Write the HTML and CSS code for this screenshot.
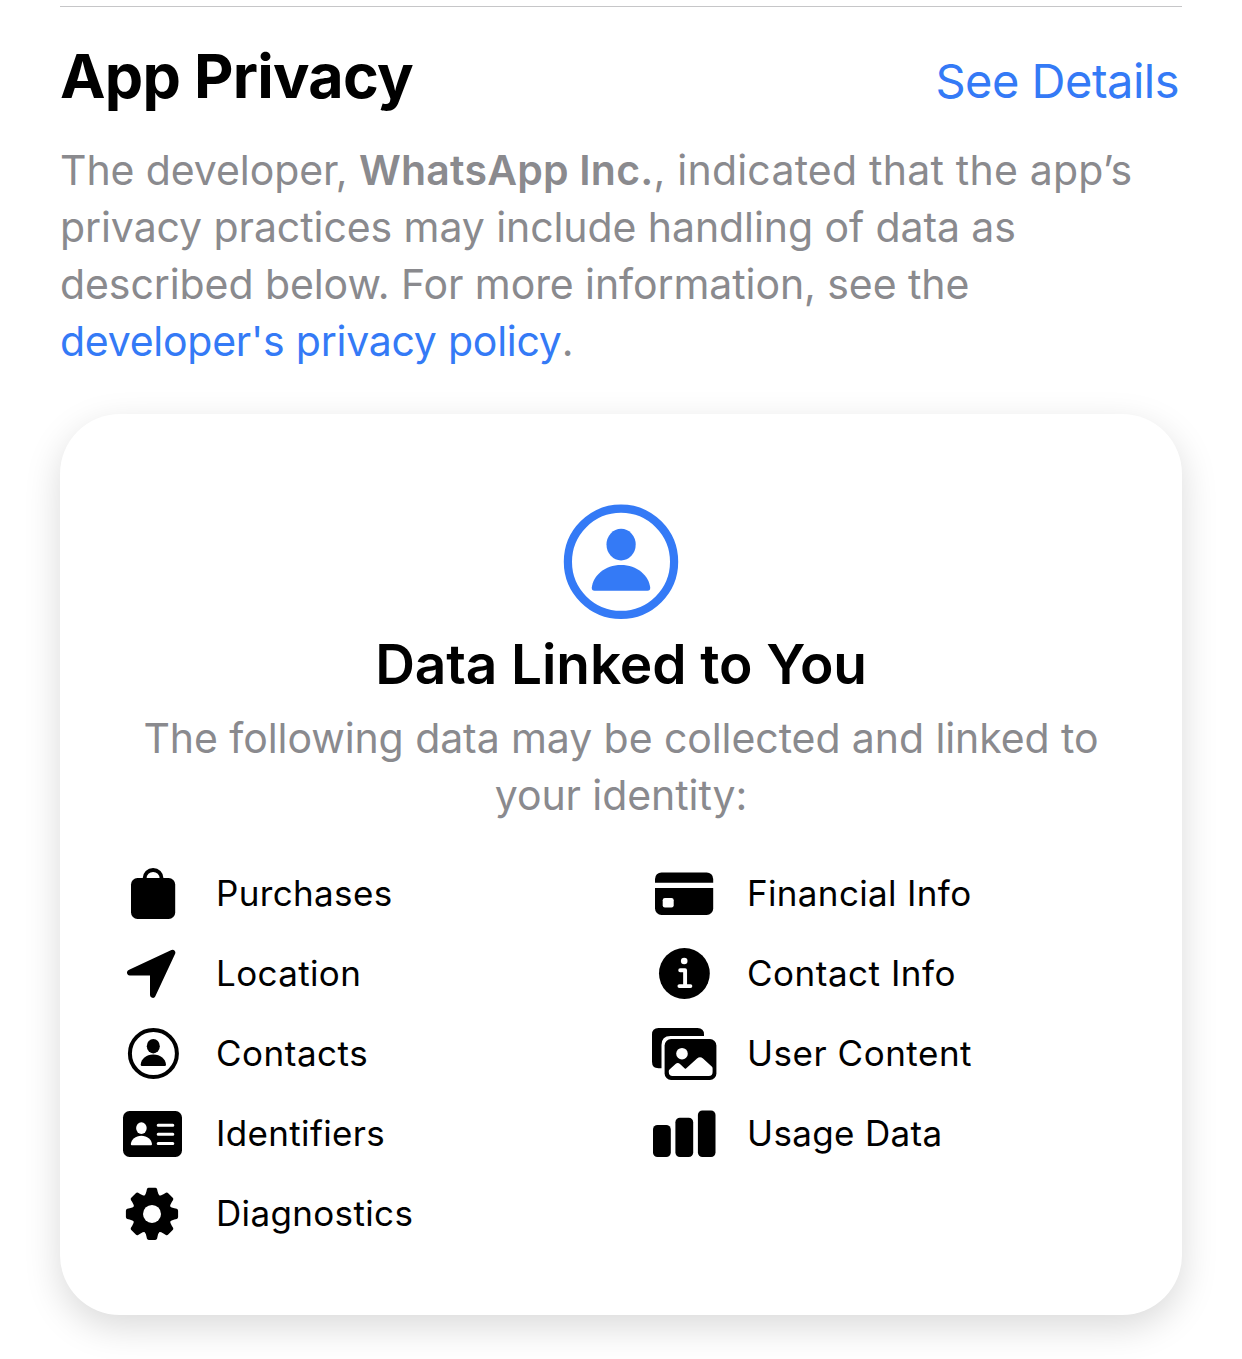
FILE: index.html
```html
<!DOCTYPE html>
<html lang="en">
<head>
<meta charset="utf-8">
<meta name="viewport" content="width=device-width, initial-scale=1">
<title>App Privacy</title>
<link rel="stylesheet" href="styles.css">
</head>
<body>
<main class="page">
  <header class="header">
    <h1 class="title">App Privacy</h1>
    <a class="details">See Details</a>
  </header>
  <p class="body intro">
    The developer, <strong>WhatsApp Inc.</strong><span class="line-tail">, indicated that the app’s</span><br>
    privacy practices may include handling of data as<br>
    described below. For more information, see the<br>
    <a class="link">developer's privacy policy</a>.
  </p>
  <section class="card">
    <svg class="hero" viewBox="0 0 116 116" aria-hidden="true">
      <circle cx="58" cy="57.8" r="53.1" fill="none" stroke="currentColor" stroke-width="8.2"/>
      <ellipse cx="58.1" cy="40.6" rx="14.6" ry="15.8" fill="currentColor"/>
      <path d="M31.5 86.8Q28.6 86.8 28.8 83.6C30 71.5 42 60.9 58 60.9S86 71.5 87.2 83.6Q87.4 86.8 84.5 86.8Z" fill="currentColor"/>
    </svg>
    <h2 class="card-title">Data Linked to You</h2>
    <p class="body card-text">The following data may be collected and linked to<br>your identity:</p>
    <ul class="list">
      <li class="item">
        <svg class="icon" viewBox="0 0 80 80" aria-hidden="true">
          <rect x="18" y="25" width="44.2" height="41" rx="6.5"/>
          <path d="M31.6 27V25.5A8.5 8.5 0 0 1 48.6 25.5V27" fill="none" stroke="currentColor" stroke-width="3.9"/>
        </svg>
        <span>Purchases</span>
      </li>
      <li class="item">
        <svg class="icon" viewBox="0 0 80 80" aria-hidden="true">
          <rect x="11" y="19.4" width="58.2" height="42.6" rx="6.5"/>
          <path class="cut" d="M10 29.7H70V35H10Z"/>
          <rect class="cut" x="18.7" y="45" width="11" height="9.4" rx="2.2"/>
        </svg>
        <span>Financial Info</span>
      </li>
      <li class="item">
        <svg class="icon" viewBox="0 0 80 80" aria-hidden="true">
          <path d="M16.8 39.6L59.6 19.6L39.8 62V39.6Z" stroke="currentColor" stroke-width="5.6" stroke-linejoin="round"/>
        </svg>
        <span>Location</span>
      </li>
      <li class="item">
        <svg class="icon" viewBox="0 0 80 80" aria-hidden="true">
          <circle cx="40.4" cy="40.5" r="25.4"/>
          <circle class="cut" cx="40.2" cy="28" r="3.3"/>
          <path d="M36.2 37.3H41.1V53M35.4 53.1H46.4" fill="none" stroke="#fff" stroke-width="3.9" stroke-linecap="round" stroke-linejoin="round"/>
        </svg>
        <span class="wide">Contact Info</span>
      </li>
      <li class="item">
        <svg class="icon" viewBox="0 0 80 80" aria-hidden="true">
          <circle cx="40.4" cy="40.5" r="23.5" fill="none" stroke="currentColor" stroke-width="4"/>
          <ellipse cx="40.3" cy="33.2" rx="6.5" ry="7.2"/>
          <path d="M29 53Q27.6 53 27.7 51.5C28.2 46 33 41.5 40.3 41.5S52.5 46 53 51.5Q53 53 51.7 53Z"/>
        </svg>
        <span class="wide">Contacts</span>
      </li>
      <li class="item">
        <svg class="icon" viewBox="0 0 80 80" aria-hidden="true">
          <path d="M14.5 15H53.5Q60 15 60 21.5V23H26.5Q17.5 23 17.5 32V55.3H14.5Q8 55.3 8 48.8V21.5Q8 15 14.5 15Z"/>
          <rect x="20.6" y="26" width="51.8" height="41" rx="6.5"/>
          <circle class="cut" cx="38" cy="40.7" r="5.8"/>
          <path class="cut" d="M24.8 59V58Q24.8 57.2 25.5 56.5L31.5 51Q33.8 49 36 51L40.8 55.4Q41.4 55.9 42 55.4L53 45.4Q56 43 59 45.4L68 53.8Q68.6 54.4 68.6 55.5V59Q68.6 62.9 64.8 62.9H28.6Q24.8 62.9 24.8 59Z"/>
        </svg>
        <span class="wide">User Content</span>
      </li>
      <li class="item">
        <svg class="icon" viewBox="0 0 80 80" aria-hidden="true">
          <rect x="10" y="18" width="59" height="46" rx="6.5"/>
          <ellipse class="cut" cx="28.4" cy="35.1" rx="5.3" ry="5.8"/>
          <path class="cut" d="M18.8 52.2Q17.8 52.2 17.8 51C18.3 46.5 22.5 42.7 28.4 42.7S38.5 46.5 39 51Q39 52.2 38 52.2Z"/>
          <path d="M45.2 32.2H59.8M45.2 41.2H59.8M45.2 50.4H59.8" fill="none" stroke="#fff" stroke-width="3" stroke-linecap="round"/>
        </svg>
        <span>Identifiers</span>
      </li>
      <li class="item">
        <svg class="icon" viewBox="0 0 80 80" aria-hidden="true">
          <rect x="9" y="32" width="17.8" height="32" rx="4.5"/>
          <rect x="31.4" y="24.8" width="17.8" height="39.2" rx="4.5"/>
          <rect x="53.9" y="17.5" width="17.6" height="46.5" rx="4.5"/>
        </svg>
        <span>Usage Data</span>
      </li>
      <li class="item">
        <svg class="icon" viewBox="0 0 80 80" aria-hidden="true">
          <defs>
            <path id="tooth" d="M31 23.5Q32.8 21.5 33.4 18.5L33.9 16.2Q34.3 14.8 35.8 14.8H42.2Q43.7 14.8 44.1 16.2L44.6 18.5Q45.2 21.5 47 23.5Z"/>
          </defs>
          <circle cx="39" cy="40.9" r="19.6"/>
          <use href="#tooth"/>
          <use href="#tooth" transform="rotate(45 39 40.9)"/>
          <use href="#tooth" transform="rotate(90 39 40.9)"/>
          <use href="#tooth" transform="rotate(135 39 40.9)"/>
          <use href="#tooth" transform="rotate(180 39 40.9)"/>
          <use href="#tooth" transform="rotate(225 39 40.9)"/>
          <use href="#tooth" transform="rotate(270 39 40.9)"/>
          <use href="#tooth" transform="rotate(315 39 40.9)"/>
          <circle class="cut" cx="39" cy="40.9" r="9"/>
        </svg>
        <span>Diagnostics</span>
      </li>
    </ul>
  </section>
</main>
</body>
</html>
```
FILE: styles.css
```css
* { box-sizing: border-box; }

body {
  margin: 0;
  font-family: Inter, "Liberation Sans", sans-serif;
  background: #fff;
  color: #000;
}

.page {
  height: 1359px;
  padding: 6px 60px 0;
  overflow: hidden;
}

.header {
  display: flex;
  justify-content: space-between;
  align-items: flex-start;
  height: 136px;
  padding: 32px 3px 0 0;
  border-top: 1px solid #c6c6c8;
}

.title {
  margin: 0;
  font-size: 61px;
  line-height: 74px;
  font-weight: 700;
  letter-spacing: -0.75px;
}

.details {
  padding-top: 13px;
  font-size: 47px;
  line-height: 58px;
  letter-spacing: -0.5px;
  color: #347af6;
}

.body {
  margin: 0;
  font-size: 41px;
  line-height: 57px;
  letter-spacing: -0.08px;
  color: #8a8a8e;
  white-space: nowrap;
}

.body strong { font-weight: 600; letter-spacing: 0.2px; }

.line-tail { letter-spacing: 0.22px; }

.link { color: #347af6; letter-spacing: -0.25px; }

.card {
  display: flex;
  flex-direction: column;
  align-items: center;
  height: 901px;
  margin-top: 44px;
  padding-top: 90px;
  border-radius: 60px;
  background: #fff;
  box-shadow: 0 12px 36px rgba(0, 0, 0, 0.15);
}

.hero {
  display: block;
  width: 116px;
  height: 116px;
  color: #347af6;
}

.card-title {
  margin: 11px 0 0;
  font-size: 55px;
  line-height: 66px;
  font-weight: 600;
  letter-spacing: -0.1px;
}

.card-text {
  margin-top: 13px;
  text-align: center;
}

.list {
  display: grid;
  grid-template-columns: 531px 1fr;
  grid-auto-rows: 80px;
  align-self: stretch;
  margin: 29px 0 0;
  padding: 0 0 0 53px;
  list-style: none;
}

.item {
  display: flex;
  align-items: center;
  gap: 23px;
  font-size: 35px;
  line-height: 80px;
  letter-spacing: 0.35px;
}

.wide { letter-spacing: 0.52px; }

.icon {
  flex: none;
  width: 80px;
  height: 80px;
  fill: currentColor;
}

.cut { fill: #fff; }
```
